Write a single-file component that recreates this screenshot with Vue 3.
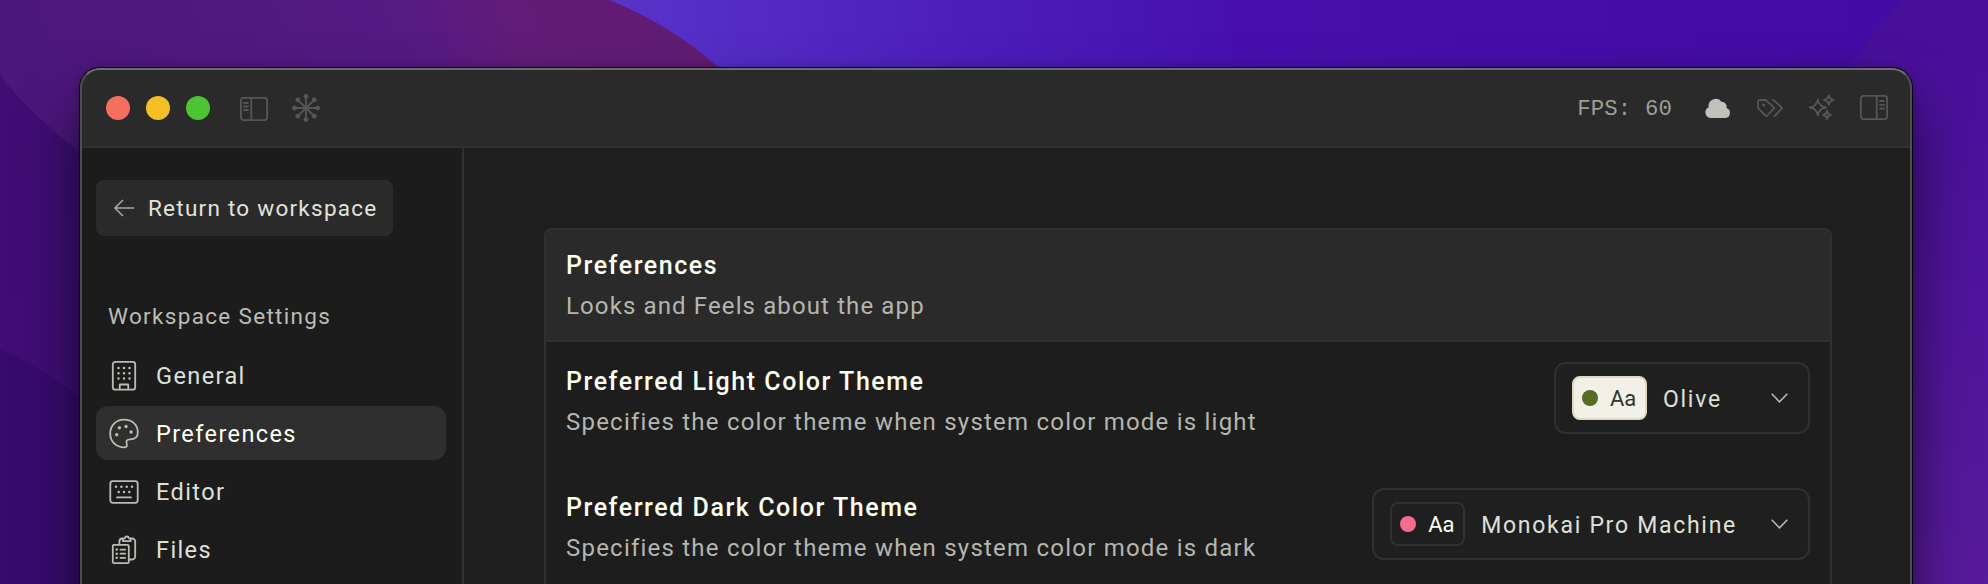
<template>
  <div class="desktop">
    <svg class="wallpaper" viewBox="0 0 1988 584" preserveAspectRatio="none">
      <defs>
        <linearGradient id="blue" x1="600" y1="0" x2="1988" y2="0" gradientUnits="userSpaceOnUse">
          <stop offset="0" stop-color="#5834cb" />
          <stop offset="0.28" stop-color="#4c1db8" />
          <stop offset="0.46" stop-color="#4710ae" />
          <stop offset="1" stop-color="#420ba0" />
        </linearGradient>
        <linearGradient id="plum" x1="0" y1="0" x2="700" y2="-260" gradientUnits="userSpaceOnUse">
          <stop offset="0" stop-color="#4c177c" />
          <stop offset="0.5" stop-color="#551a83" />
          <stop offset="0.63" stop-color="#621c79" />
          <stop offset="0.9" stop-color="#601b70" />
        </linearGradient>
        <linearGradient id="deep" x1="0" y1="75" x2="0" y2="584" gradientUnits="userSpaceOnUse">
          <stop offset="0" stop-color="#3f0d74" />
          <stop offset="1" stop-color="#410e78" />
        </linearGradient>
        <linearGradient id="violet" x1="0" y1="0" x2="0" y2="584" gradientUnits="userSpaceOnUse">
          <stop offset="0" stop-color="#470f9a" />
          <stop offset="1" stop-color="#581a9c" />
        </linearGradient>
      </defs>
      <rect width="1988" height="584" fill="url(#blue)" />
      <path d="M0 0H610Q672 26 718 67L900 584H0Z" fill="url(#plum)" />
      <path d="M0 75Q32 116 80 152L200 584H0Z" fill="url(#deep)" />
      <path d="M0 350Q45 368 80 398L200 584H0Z" fill="#370b6e" />
      <path d="M1901 0Q1896 12 1880 28Q1860 50 1850 67V584H1988V0Z" fill="url(#violet)" />
    </svg>

    <div class="window">
      <header class="titlebar">
        <div class="lights">
          <span class="light red"></span>
          <span class="light yellow"></span>
          <span class="light green"></span>
        </div>
        <svg class="icon panel-left" viewBox="0 0 28 24">
          <rect x="0.9" y="0.9" width="26.2" height="22.2" rx="2.5" />
          <path d="M11.3 1V23M4 6H8M4 9.5H8M4 13H8" />
        </svg>
        <svg class="icon hub" viewBox="0 0 28 28">
          <path d="M14 3V25M3 14H25M6 6L22 22M22 6L6 22" />
          <g class="solid">
            <circle v-for="(p, i) in hubDots" :key="i" :cx="p[0]" :cy="p[1]" r="2.4" />
          </g>
        </svg>

        <div class="status">
          <span class="fps">FPS: {{ fps }}</span>
          <svg class="icon cloud" viewBox="0 0 26 20">
            <path d="M6 20A5.7 5.7 0 0 1 3.6 9.2A7.3 7.3 0 0 1 16.6 3.7A4.9 4.9 0 0 1 21.4 10.1A5.1 5.1 0 0 1 20.5 20Z" />
          </svg>
          <svg class="icon tags" viewBox="0 0 26 18">
            <path d="M1 2.6A1.6 1.6 0 0 1 2.6 1H8.6L16.6 8.2Q17.4 9 16.6 9.8L10.2 16.5Q9.3 17.4 8.4 16.5L1 9.2ZM16 0.8L24.5 8.2Q25.3 9 24.5 9.8L17.4 17.4" />
            <circle class="solid" cx="6.6" cy="6" r="1.5" />
          </svg>
          <svg class="icon sparkles" viewBox="0 0 26 26">
            <path d="M8.8 5.4Q9.9 12.4 17 13.5Q9.9 14.6 8.8 21.6Q7.7 14.6 0.9 13.5Q7.7 12.4 8.8 5.4ZM19.8 1.3Q20.6 5.2 24.6 6Q20.6 6.8 19.8 10.7Q19 6.8 15 6Q19 5.2 19.8 1.3ZM18 17Q18.7 20.2 22 20.9Q18.7 21.6 18 25Q17.3 21.6 14 20.9Q17.3 20.2 18 17Z" />
          </svg>
          <svg class="icon panel-right" viewBox="0 0 28 25">
            <rect x="0.9" y="0.9" width="26.2" height="23.2" rx="2.5" />
            <path d="M16.7 1V24M20 6H24M20 9.8H24M20 13.5H24" />
          </svg>
        </div>
      </header>

      <div class="body">
        <aside class="sidebar">
          <button class="return">
            <svg class="arrow" viewBox="0 0 20 18">
              <path d="M20 9H1M9 1L1 9L9 17" />
            </svg>
            <span>Return to workspace</span>
          </button>
          <h2 class="group">Workspace Settings</h2>
          <nav class="nav">
            <a v-for="item in navItems" :key="item.label" class="item" :class="{ active: item.label === current }">
              <svg class="nav-icon" viewBox="0 0 32 32">
                <path :d="item.path" />
                <path class="dots" :d="item.dots" />
              </svg>
              <span class="label">{{ item.label }}</span>
            </a>
          </nav>
        </aside>

        <main class="content">
          <section class="card">
            <div class="card-head">
              <div class="title">Preferences</div>
              <div class="desc">Looks and Feels about the app</div>
            </div>
            <div v-for="row in rows" :key="row.title" class="row">
              <div class="text">
                <div class="title">{{ row.title }}</div>
                <div class="desc">{{ row.desc }}</div>
              </div>
              <div class="select">
                <div class="swatch" :class="row.mode">
                  <span class="dot"></span>
                  <span>Aa</span>
                </div>
                <span class="value">{{ row.value }}</span>
                <svg class="chevron" viewBox="0 0 17 10">
                  <path d="M0.7 0.7L8.5 8.8L16.3 0.7" />
                </svg>
              </div>
            </div>
          </section>
        </main>
      </div>
    </div>
  </div>
</template>

<script setup>
import { ref } from 'vue'

const fps = ref(60)
const current = ref('Preferences')

const hubDots = [
  [14, 14], [14, 2.4], [14, 25.6], [2.4, 14], [25.6, 14],
  [5.8, 5.8], [22.2, 5.8], [5.8, 22.2], [22.2, 22.2]
]

const navItems = [
  {
    label: 'General',
    path: 'M7.3 2.8H24.7A2.5 2.5 0 0 1 27.2 5.3V28.2A2.5 2.5 0 0 1 24.7 30.7H7.3A2.5 2.5 0 0 1 4.8 28.2V5.3A2.5 2.5 0 0 1 7.3 2.8ZM11.7 30.7V25.5H20.3V30.7',
    dots: 'M10.5 9h.01M16 9h.01M21.5 9h.01M10.5 14.3h.01M16 14.3h.01M21.5 14.3h.01M10.5 19.6h.01M16 19.6h.01M21.5 19.6h.01'
  },
  {
    label: 'Preferences',
    path: 'M16 2.7C8 2.7 2.2 8.7 2.2 16.5C2.2 24.5 8 30.3 16 30.3C18.6 30.3 19.4 28.9 18.8 27C17.6 23.7 19 22.4 22 22.3C27 22.3 29.8 20 29.8 15.5C29.8 7.5 24 2.7 16 2.7Z',
    dots: 'M10.9 10.8h1M11.4 10.3v1M17.5 9.5h1M18 9v1M22.6 15h1M23.1 14.5v1M8.2 17.7h1M8.7 17.2v1'
  },
  {
    label: 'Editor',
    path: 'M4.8 6.2H27.2A2.5 2.5 0 0 1 29.7 8.7V25.3A2.5 2.5 0 0 1 27.2 27.8H4.8A2.5 2.5 0 0 1 2.3 25.3V8.7A2.5 2.5 0 0 1 4.8 6.2ZM9 22.4H23',
    dots: 'M8 11.7h.01M13.4 11.7h.01M18.7 11.7h.01M24 11.7h.01M10.7 17h.01M16 17h.01M21.3 17h.01'
  },
  {
    label: 'Files',
    path: 'M6 11.9H19.6A1.2 1.2 0 0 1 20.8 13.1V29A1.2 1.2 0 0 1 19.6 30.2H6A1.2 1.2 0 0 1 4.8 29V13.1A1.2 1.2 0 0 1 6 11.9ZM11.4 11.5V8.5A3 3 0 0 1 14.4 5.5H15.2M22.4 5.5H24.2A3 3 0 0 1 27.2 8.5V23.5A3 3 0 0 1 24.2 26.5H21.5M15 8.2V6.8Q15 5.4 16.8 5.2Q17.2 3.5 18.8 3.5Q20.6 3.5 21 5.2Q22.6 5.4 22.6 6.8V8.2ZM12.4 16.6H17.2M12.4 20.7H17.2M12.4 24.8H17.2',
    dots: 'M8.7 16.6h.01M8.7 20.7h.01M8.7 24.8h.01'
  }
]

const rows = [
  {
    title: 'Preferred Light Color Theme',
    desc: 'Specifies the color theme when system color mode is light',
    value: 'Olive',
    mode: 'olive'
  },
  {
    title: 'Preferred Dark Color Theme',
    desc: 'Specifies the color theme when system color mode is dark',
    value: 'Monokai Pro Machine',
    mode: 'monokai'
  }
]
</script>

<style>
body {
  margin: 0;
  background: #330a6c;
}
</style>

<style scoped>
.desktop {
  position: relative;
  display: flex;
  box-sizing: border-box;
  width: 1988px;
  height: 584px;
  padding: 68px 76px 0 80px;
  overflow: hidden;
  font-family: Roboto, "Liberation Sans", sans-serif;
}

.wallpaper {
  position: absolute;
  inset: 0;
  width: 100%;
  height: 100%;
}

.window {
  position: relative;
  flex: 1;
  height: 700px;
  border-radius: 20px;
  background: #1d1d1d;
  box-shadow: 0 0 0 1px #08020f, 0 36px 60px rgba(0, 0, 0, 0.6), 0 0 10px rgba(0, 0, 0, 0.2);
}

/* light rim drawn over the title bar and the body */
.window::after {
  content: '';
  position: absolute;
  inset: 0;
  border: 2px solid #4e4e4e;
  border-top-color: #6c6c6e;
  border-radius: 20px;
  pointer-events: none;
}

.titlebar {
  display: flex;
  align-items: center;
  box-sizing: border-box;
  height: 80px;
  padding: 0 24px 0 26px;
  border-bottom: 2px solid #303030;
  border-radius: 20px 20px 0 0;
  background: #2a2a2a;
}

.lights {
  display: flex;
  gap: 16px;
  margin-top: 2px;
}

.light {
  width: 24px;
  height: 24px;
  border-radius: 50%;
}

.red { background: #f36f5e; }
.yellow { background: #f3bf24; }
.green { background: #4dc432; }

.icon {
  flex: none;
  fill: none;
  stroke: #565654;
  stroke-width: 1.8;
  stroke-linecap: round;
  stroke-linejoin: round;
}

.icon .solid {
  fill: #565654;
  stroke: none;
}

.panel-left {
  width: 28px;
  height: 24px;
  margin: 4px 0 0 30px;
}

.hub {
  width: 28px;
  height: 28px;
  margin: 2px 0 0 24px;
}

.status {
  display: flex;
  align-items: center;
  margin-left: auto;
}

.fps {
  margin: 3px 33px 0 0;
  color: #9d9e96;
  font: 22.3px/28px "Liberation Mono", monospace;
  letter-spacing: 0.15px;
}

.cloud {
  width: 26px;
  height: 20px;
  margin-top: 1px;
  fill: #c1c2ba;
  stroke: none;
}

.tags {
  width: 26px;
  height: 18px;
  margin: 1px 0 0 26px;
}

.sparkles {
  width: 26px;
  height: 26px;
  margin-left: 26px;
}

.panel-right {
  width: 28px;
  height: 25px;
  margin-left: 25px;
}

.body {
  display: flex;
  height: 620px;
}

.sidebar {
  box-sizing: border-box;
  width: 384px;
  padding: 32px 16px 0;
  border-right: 2px solid #303030;
  background: #1c1c1c;
}

.return {
  display: flex;
  align-items: center;
  width: 297px;
  height: 56px;
  padding: 0 0 0 18px;
  border: 0;
  border-radius: 8px;
  background: #2a2a2a;
  color: #e2e3db;
  font: 400 22.5px/56px Roboto, sans-serif;
  letter-spacing: 1.25px;
  white-space: nowrap;
}

.arrow {
  width: 20px;
  height: 18px;
  margin-right: 14px;
  fill: none;
  stroke: #a5a69d;
  stroke-width: 1.6;
}

.group {
  height: 32px;
  margin: 64px 0 16px 12px;
  color: #bcbdb5;
  font-size: 22.5px;
  font-weight: 400;
  line-height: 32px;
  letter-spacing: 1.32px;
  white-space: nowrap;
}

.nav {
  display: flex;
  flex-direction: column;
  gap: 4px;
}

.item {
  display: flex;
  align-items: center;
  gap: 16px;
  height: 54px;
  padding-left: 12px;
  border-radius: 12px;
  color: #dfe0d8;
  font-size: 23.5px;
  letter-spacing: 1.4px;
}

.label {
  margin-top: 2px;
}

.item.active {
  background: #2f2f2f;
  color: #fdfff1;
}

.nav-icon {
  width: 32px;
  height: 32px;
  fill: none;
  stroke: #bbbcb3;
  stroke-width: 1.8;
  stroke-linejoin: round;
  stroke-linecap: round;
}

.nav-icon .dots {
  stroke-width: 2.5;
}

.content {
  flex: 1;
  padding: 80px 80px 0;
  background: #1e1e1e;
}

.card {
  box-sizing: border-box;
  height: 600px;
  border: 2px solid #303030;
  border-radius: 8px;
  background: #1d1d1d;
  overflow: hidden;
}

.card-head {
  box-sizing: border-box;
  height: 112px;
  padding: 16px 20px 0;
  border-bottom: 2px solid #303030;
  background: #2a2a2a;
}

.title {
  height: 40px;
  color: #fdfff1;
  font-size: 25px;
  font-weight: 500;
  line-height: 40px;
  letter-spacing: 1.55px;
}

.desc {
  height: 40px;
  color: #b5b6ae;
  font-size: 24px;
  line-height: 40px;
  letter-spacing: 1.22px;
}

.card-head .desc {
  letter-spacing: 1.12px;
}

.row {
  display: flex;
  justify-content: space-between;
  align-items: flex-start;
  box-sizing: border-box;
  height: 126px;
  padding: 20px 20px 0;
}

.select {
  display: flex;
  align-items: center;
  box-sizing: border-box;
  min-width: 256px;
  height: 72px;
  padding: 0 20px 0 16px;
  border: 2px solid #303030;
  border-radius: 12px;
  background: #1f1f1f;
}

.swatch {
  display: flex;
  align-items: center;
  box-sizing: border-box;
  width: 75px;
  height: 44px;
  padding-left: 8px;
  gap: 12px;
  border: 2px solid #303030;
  border-radius: 8px;
  color: #fdfff1;
  font-size: 22px;
}

.dot {
  width: 16px;
  height: 16px;
  border-radius: 50%;
  background: #f46d8b;
}

.swatch.olive {
  border-color: #dedac4;
  background: #f3f0e8;
  color: #30352c;
}

.olive .dot {
  background: #556b26;
}

.value {
  margin: 2px 34px 0 16px;
  color: #dfe0d8;
  font-size: 23px;
  letter-spacing: 1.72px;
}

.chevron {
  width: 17px;
  height: 10px;
  margin-left: auto;
  fill: none;
  stroke: #b5b6ae;
  stroke-width: 1.6;
}
</style>
